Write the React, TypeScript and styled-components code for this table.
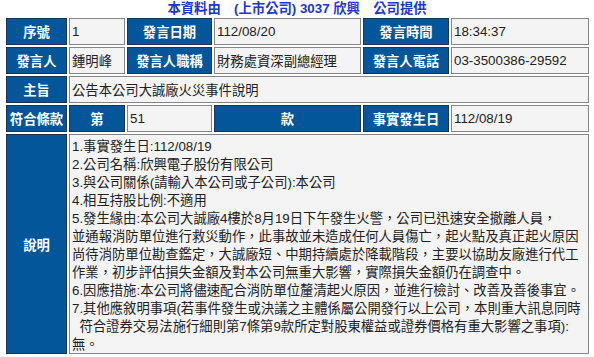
import styled, { createGlobalStyle } from "styled-components";

const GlobalStyle = createGlobalStyle`
  html, body {
    margin: 0;
    padding: 0;
    background: #ffffff;
  }
  body {
    font-family: "Liberation Sans", "Noto Sans CJK TC", Arial, sans-serif;
  }
`;

const Page = styled.div`
  width: 594px;
  height: 357px;
  padding: 0 6px;
  box-sizing: border-box;
  overflow: hidden;
`;

const Title = styled.div`
  height: 18px;
  line-height: 18px;
  text-align: center;
  font-size: 13.33px;
  font-weight: bold;
  color: #1b36d2;
  white-space: pre;
`;

const InfoGrid = styled.div`
  display: grid;
  grid-template-columns: 61px 56px 85px 147px 86px 138px;
  grid-template-rows: 27px 27px 27px 27px 220px;
  gap: 2px;
`;

const HeadCell = styled.div<{ $span?: number }>`
  grid-column: span ${({ $span }) => $span ?? 1};
  display: flex;
  align-items: center;
  justify-content: center;
  background: #03569a;
  border: 1px solid #1c3450;
  color: #ffffff;
  font-size: 13.33px;
  font-weight: bold;
  white-space: nowrap;
  overflow: hidden;
`;

const ValueCell = styled.div<{ $span?: number }>`
  grid-column: span ${({ $span }) => $span ?? 1};
  display: flex;
  align-items: center;
  padding: 0 2px;
  background: #f4f4f4;
  border: 1px solid #858585;
  color: #222222;
  font-size: 13.33px;
  white-space: nowrap;
  overflow: hidden;
`;

const DescCell = styled.div`
  grid-column: span 5;
  padding: 3px 2px;
  background: #f4f4f4;
  border: 1px solid #858585;
  color: #222222;
  font-size: 13.33px;
  overflow: hidden;
`;

const DescLine = styled.div`
  height: 18px;
  line-height: 18px;
  white-space: pre;
`;

const descLines = [
  "1.事實發生日:112/08/19",
  "2.公司名稱:欣興電子股份有限公司",
  "3.與公司關係(請輸入本公司或子公司):本公司",
  "4.相互持股比例:不適用",
  "5.發生緣由:本公司大誠廠4樓於8月19日下午發生火警，公司已迅速安全撤離人員，",
  "並通報消防單位進行救災動作，此事故並未造成任何人員傷亡，起火點及真正起火原因",
  "尚待消防單位勘查鑑定，大誠廠短、中期持續處於降載階段，主要以協助友廠進行代工",
  "作業，初步評估損失金額及對本公司無重大影響，實際損失金額仍在調查中。",
  "6.因應措施:本公司將儘速配合消防單位釐清起火原因，並進行檢討、改善及善後事宜。",
  "7.其他應敘明事項(若事件發生或決議之主體係屬公開發行以上公司，本則重大訊息同時",
  "  符合證券交易法施行細則第7條第9款所定對股東權益或證券價格有重大影響之事項):",
  "無。",
];

export default function App() {
  return (
    <Page>
      <GlobalStyle />
      <Title>{"本資料由\u3000(上市公司) 3037 欣興\u3000公司提供"}</Title>
      <InfoGrid>
        <HeadCell>序號</HeadCell>
        <ValueCell>1</ValueCell>
        <HeadCell>發言日期</HeadCell>
        <ValueCell>112/08/20</ValueCell>
        <HeadCell>發言時間</HeadCell>
        <ValueCell>18:34:37</ValueCell>

        <HeadCell>發言人</HeadCell>
        <ValueCell>鍾明峰</ValueCell>
        <HeadCell>發言人職稱</HeadCell>
        <ValueCell>財務處資深副總經理</ValueCell>
        <HeadCell>發言人電話</HeadCell>
        <ValueCell>03-3500386-29592</ValueCell>

        <HeadCell>主旨</HeadCell>
        <ValueCell $span={5}>公告本公司大誠廠火災事件說明</ValueCell>

        <HeadCell>符合條款</HeadCell>
        <HeadCell>第</HeadCell>
        <ValueCell>51</ValueCell>
        <HeadCell>款</HeadCell>
        <HeadCell>事實發生日</HeadCell>
        <ValueCell>112/08/19</ValueCell>

        <HeadCell>說明</HeadCell>
        <DescCell>
          {descLines.map((line, i) => (
            <DescLine key={i}>{line}</DescLine>
          ))}
        </DescCell>
      </InfoGrid>
    </Page>
  );
}
